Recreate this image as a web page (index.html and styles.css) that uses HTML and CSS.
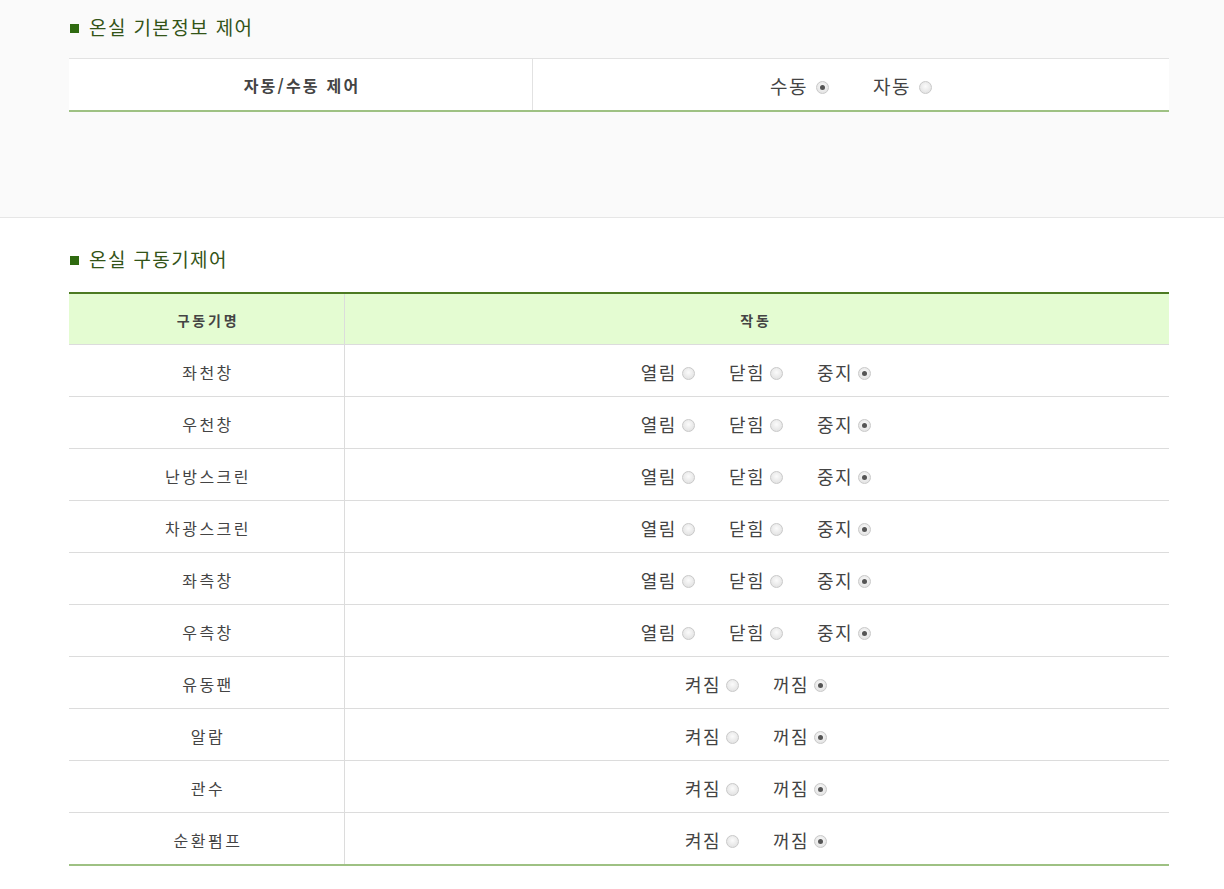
FILE: index.html
```html
<!DOCTYPE html>
<html lang="ko">
<head>
<meta charset="utf-8">
<title>온실 제어</title>
<link rel="stylesheet" href="styles.css">
</head>
<body>
<section class="sec sec-basic">
  <div class="wrap">
    <h2 class="title"><span class="sq"></span>온실 기본정보 제어</h2>
    <div class="tbl1">
      <div class="t1-label">자동/수동 제어</div>
      <div class="t1-val">
        <span class="opt">수동<i class="radio on"></i></span>
        <span class="opt">자동<i class="radio"></i></span>
      </div>
    </div>
  </div>
</section>
<section class="sec sec-drive">
  <div class="wrap">
    <h2 class="title"><span class="sq"></span>온실 구동기제어</h2>
    <div class="tbl2">
      <div class="row head"><div class="c1">구동기명</div><div class="c2">작동</div></div>
      <div class="row"><div class="c1">좌천창</div><div class="c2"><span class="opt">열림<i class="radio"></i></span><span class="opt">닫힘<i class="radio"></i></span><span class="opt">중지<i class="radio on"></i></span></div></div>
      <div class="row"><div class="c1">우천창</div><div class="c2"><span class="opt">열림<i class="radio"></i></span><span class="opt">닫힘<i class="radio"></i></span><span class="opt">중지<i class="radio on"></i></span></div></div>
      <div class="row"><div class="c1">난방스크린</div><div class="c2"><span class="opt">열림<i class="radio"></i></span><span class="opt">닫힘<i class="radio"></i></span><span class="opt">중지<i class="radio on"></i></span></div></div>
      <div class="row"><div class="c1">차광스크린</div><div class="c2"><span class="opt">열림<i class="radio"></i></span><span class="opt">닫힘<i class="radio"></i></span><span class="opt">중지<i class="radio on"></i></span></div></div>
      <div class="row"><div class="c1">좌측창</div><div class="c2"><span class="opt">열림<i class="radio"></i></span><span class="opt">닫힘<i class="radio"></i></span><span class="opt">중지<i class="radio on"></i></span></div></div>
      <div class="row"><div class="c1">우측창</div><div class="c2"><span class="opt">열림<i class="radio"></i></span><span class="opt">닫힘<i class="radio"></i></span><span class="opt">중지<i class="radio on"></i></span></div></div>
      <div class="row"><div class="c1">유동팬</div><div class="c2"><span class="opt">켜짐<i class="radio"></i></span><span class="opt">꺼짐<i class="radio on"></i></span></div></div>
      <div class="row"><div class="c1">알람</div><div class="c2"><span class="opt">켜짐<i class="radio"></i></span><span class="opt">꺼짐<i class="radio on"></i></span></div></div>
      <div class="row"><div class="c1">관수</div><div class="c2"><span class="opt">켜짐<i class="radio"></i></span><span class="opt">꺼짐<i class="radio on"></i></span></div></div>
      <div class="row last"><div class="c1">순환펌프</div><div class="c2"><span class="opt">켜짐<i class="radio"></i></span><span class="opt">꺼짐<i class="radio on"></i></span></div></div>
    </div>
  </div>
</section>
</body>
</html>
```
FILE: styles.css
```css
* { box-sizing: border-box; }
html, body { margin: 0; padding: 0; background: #fff; }
body {
  font-family: "Noto Sans CJK KR", "Noto Sans", sans-serif;
  color: #444;
}
.wrap { width: 1100px; margin-left: 69px; }
.sec-basic {
  background: #fafafa;
  border-bottom: 1px solid #e6e6e6;
  padding: 9px 0 105px;
}
.sec-drive { padding: 23px 0 24px; }
.title {
  margin: 0;
  height: 36px;
  line-height: 36px;
  font-size: 19px;
  font-weight: 400;
  color: #335418;
  display: flex;
  align-items: center;
  letter-spacing: 1.4px;
}
.sq {
  display: inline-block;
  width: 9px;
  height: 9px;
  background: #2f6a10;
  margin: 2px 10px 0 1px;
}
.sec-basic .title { margin-bottom: 13px; }
.sec-drive .title { margin-bottom: 15px; }

.tbl1 {
  display: grid;
  grid-template-columns: 464px 1fr;
  background: #fff;
  border-top: 1px solid #e2e2e2;
  border-bottom: 2px solid #9ec183;
  height: 54px;
}
.t1-label {
  border-right: 1px solid #e2e2e2;
  display: flex;
  align-items: center;
  justify-content: center;
  font-size: 16px;
  font-weight: 600;
  letter-spacing: 2.2px;
  color: #444;
  padding-top: 1px;
  padding-left: 3px;
}
.t1-val {
  display: flex;
  align-items: center;
  justify-content: center;
  gap: 44px;
  padding-top: 2px;
}
.t1-val .opt {
  font-size: 19px;
  letter-spacing: 1.5px;
}
.t1-val .radio { margin-left: 8px; }
.opt {
  display: inline-flex;
  align-items: center;
  font-size: 18px;
  letter-spacing: 1.5px;
  color: #444;
  line-height: 1;
}
.radio {
  display: inline-block;
  width: 13px;
  height: 13px;
  border-radius: 50%;
  border: 1px solid #c9c9c9;
  background: radial-gradient(circle at 50% 40%, #fbfbfb 0, #e4e4e4 75%);
  margin-left: 5px;
  margin-top: 3px;
  position: relative;
}
.radio.on::after {
  content: "";
  position: absolute;
  left: 3px;
  top: 3px;
  width: 5px;
  height: 5px;
  border-radius: 50%;
  background: #555;
}

.tbl2 { border-top: 2px solid #4c7a22; }
.row {
  display: grid;
  grid-template-columns: 276px 1fr;
  height: 52px;
  border-bottom: 1px solid #dcdcdc;
}
.row.head {
  height: 51px;
  background: #e4fcd2;
}
.row.last {
  height: 53px;
  border-bottom: 2px solid #9ec183;
}
.c1 {
  border-right: 1px solid #dcdcdc;
  display: flex;
  align-items: center;
  justify-content: center;
  font-size: 16px;
  letter-spacing: 2.5px;
  color: #444;
  padding-top: 2px;
  padding-left: 3px;
}
.c2 {
  display: flex;
  align-items: center;
  justify-content: center;
  gap: 34px;
  padding-top: 2px;
  padding-right: 2px;
}
.head .c1, .head .c2 {
  font-size: 14px;
  font-weight: 700;
  letter-spacing: 2.8px;
  color: #444;
}
```
